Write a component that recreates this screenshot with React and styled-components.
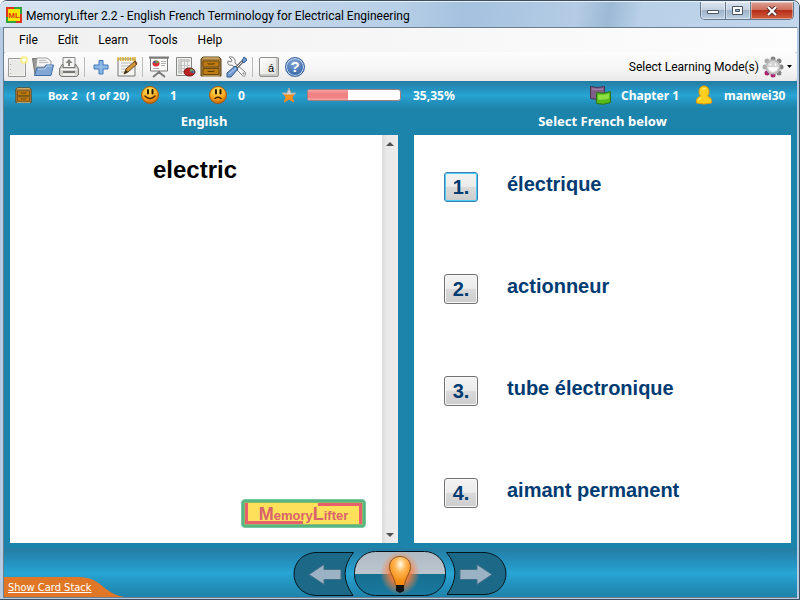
import React from "react";
import styled, { createGlobalStyle } from "styled-components";

const ui = `"Noto Sans", "Open Sans", sans-serif`;
const chrome = `Roboto, "Open Sans", sans-serif`;
const arial = `"Liberation Sans", Arial, sans-serif`;

const GlobalStyle = createGlobalStyle`
  * { box-sizing: border-box; }
  body { margin: 0; background: #fff; }
  button { font: inherit; color: inherit; padding: 0; border: 0; background: none; cursor: pointer; }
  svg { display: block; flex: none; }
`;

const Window = styled.div`
  min-height: 100vh;
  display: flex;
  flex-direction: column;
  padding: 2px 2px 1px 3px;
  border: 1px solid #3d4f60;
  border-width: 1px 1px 1px 0;
  border-radius: 7px 7px 0 0;
  background: #b4cbe2;
  font-family: ${ui};
  font-size: 12px;
  color: #000;
`;

const TitleBar = styled.header`
  display: flex;
  align-items: center;
  height: 26px;
  margin: -2px -2px 0 -3px;
  padding-left: 6px;
  border-radius: 6px 6px 0 0;
  border-top: 1px solid #e8f1fa;
  background: linear-gradient(100deg, #d5e2f0 0%, #cbdcee 25%, #b7cfe7 50%, #a5c1df 58%, #b4cce5 72%, #9db9d5 76%, #b8d0e8 80%, #c2d7ec 100%);
`;

const Title = styled.h1`
  flex: 1;
  margin: 2px 0 0 4px;
  font-family: ${chrome};
  font-size: 12px;
  line-height: 16px;
  font-weight: 400;
  white-space: nowrap;
`;

const Controls = styled.div`
  display: flex;
  align-self: flex-start;
  margin-right: 5px;
  height: 18px;
  border: 1px solid #64788e;
  border-top: 0;
  border-radius: 0 0 5px 5px;
  overflow: hidden;
`;

const ControlButton = styled.button`
  width: ${(p) => (p.$close ? 42 : 25)}px;
  display: grid;
  place-items: center;
  border-right: ${(p) => (p.$close ? 0 : 1)}px solid #64788e;
  background: ${(p) =>
    p.$close
      ? "linear-gradient(#dda093 0, #cf6f5c 45%, #b52c18 50%, #d0603f 100%)"
      : "linear-gradient(#dbe5f0 0, #c3d1e0 45%, #9fb3c9 50%, #bccfe3 100%)"};
  box-shadow: inset 0 0 0 1px #ffffff66;
`;

const Client = styled.div`
  flex: 1;
  display: flex;
  flex-direction: column;
  border: 1px solid #6b7f90;
  border-width: 1px 0 1px 1px;
`;

const MenuBar = styled.nav`
  display: flex;
  height: 24px;
  padding-left: 5px;
  background: linear-gradient(90deg, #f0f0f0, #f6f6f6 45%, #fdfdfd);
`;

const MenuItem = styled.button`
  height: 24px;
  padding: 0 10px;
  font-family: ${chrome};
  line-height: 24px;
`;

const Toolbar = styled.div`
  display: flex;
  align-items: center;
  gap: 4px;
  height: 29px;
  padding: 0 5px 0 2px;
  background: linear-gradient(#fdfdfd, #f5f5f5 60%, #e9e9e9);
  border-radius: 3px;
`;

const ToolButton = styled.button`
  width: 22px;
  height: 22px;
`;

const Divider = styled.span`
  width: 2px;
  height: 20px;
  border-left: 1px solid #bcbcbc;
`;

const ModeButton = styled.button`
  display: flex;
  align-items: center;
  gap: 3px;
  margin-left: auto;
  font-family: ${chrome};
  line-height: 22px;
`;

const band = "linear-gradient(#257ca3 0%, #2496c4 35%, #28a5d4 52%, #2391be 75%, #1e83aa 100%)";

const StatusBar = styled.section`
  display: flex;
  align-items: center;
  height: 28px;
  padding: 0 8px 0 10px;
  background: ${band};
  color: #fff;
  font-weight: 700;
  white-space: nowrap;
`;

const StatusIcon = styled.span`
  width: ${(p) => p.$width || 24}px;
  margin-right: ${(p) => p.$after || 8}px;
  display: flex;
  justify-content: center;
`;

const StatusText = styled.span`
  width: ${(p) => (p.$width ? `${p.$width}px` : "auto")};
  font-size: ${(p) => (p.$small ? 11 : 12)}px;
`;

const Spacer = styled.span`
  flex: 1;
`;

const Track = styled.div`
  width: 94px;
  height: 12px;
  margin-right: 12px;
  border: 1px solid #a67b7f;
  border-radius: 3px;
  background: #fff;
  overflow: hidden;
`;

const Fill = styled.div`
  height: 100%;
  background: linear-gradient(#f5a1a1, #f08080 40%, #f08484 75%, #f6a5a5);
`;

const Main = styled.main`
  flex: 1;
  display: grid;
  grid-template-columns: 388fr 377fr;
  grid-template-rows: 26px 1fr;
  column-gap: 16px;
  padding: 0 6px 5px;
  background: #1c84aa;
`;

const PaneTitle = styled.h2`
  margin: 0;
  color: #fff;
  font-size: 13px;
  line-height: 24px;
  font-weight: 700;
  text-align: center;
`;

const Question = styled.section`
  display: grid;
  grid-template-columns: 1fr 16px;
  background: #fff;
`;

const QuestionBody = styled.div`
  display: flex;
  flex-direction: column;
  justify-content: space-between;
  padding: 20px 16px 15px 0;
`;

const Word = styled.p`
  margin: 0;
  padding-left: 14px;
  font: 700 24px/30px ${arial};
  text-align: center;
`;

const Logo = styled.div`
  align-self: flex-end;
  width: 125px;
  height: 29px;
  padding: 2px;
  border: 1px solid #79c79a;
  border-radius: 4px;
  background: #55b584;
`;

const LogoFace = styled.div`
  height: 100%;
  border: 1px solid #8cbb68;
  background:
    linear-gradient(#e8606c, #e8606c) left / 3px 100% no-repeat,
    linear-gradient(#e8606c, #e8606c) left bottom / 58px 3px no-repeat,
    linear-gradient(#e8606c, #e8606c) right / 3px 100% no-repeat,
    linear-gradient(#e8606c, #e8606c) right top / 44px 3px no-repeat,
    #ffe05a;
  color: #d9636c;
  font: 700 13px/23px ${arial};
  text-align: center;
`;

const Capital = styled.span`
  font-size: 18px;
`;

const Scrollbar = styled.div`
  display: flex;
  flex-direction: column;
  justify-content: space-between;
  background: linear-gradient(90deg, #dcdcdc, #e9e9e9 30%, #ececec);
`;

const ScrollButton = styled.button`
  height: 17px;
  display: grid;
  place-items: center;
`;

const Answers = styled.section`
  display: grid;
  grid-template-rows: repeat(4, 1fr);
  padding: 0 30px;
  background: #fff;
  color: #003b72;
  font: 700 20px/24px ${arial};
`;

const Answer = styled.div`
  display: flex;
  align-items: center;
  gap: 29px;
`;

const AnswerButton = styled.button`
  width: 34px;
  height: 30px;
  margin-top: 2px;
  border: 1px solid ${(p) => (p.$active ? "#3c7fb1" : "#707070")};
  border-radius: 3px;
  background: linear-gradient(#f3f3f3 0, #ebebeb 48%, #dadada 50%, #cdcdcd 100%);
  box-shadow: inset 0 0 0 ${(p) => (p.$active ? "1px #45cff8" : "1px #f8f8f8")};
  line-height: 28px;
`;

const AnswerLabel = styled.label`
  margin-bottom: 4px;
`;

const Footer = styled.footer`
  display: grid;
  grid-template-columns: 1fr 214px 1fr;
  height: 49px;
  padding-right: 2px;
  background: ${band};
`;

const Tab = styled.div`
  display: grid;
  align-self: end;
  justify-self: start;
  width: 120px;
  height: 20px;
  > * { grid-area: 1 / 1; }
`;

const TabLink = styled.a`
  z-index: 1;
  padding-left: 4px;
  color: #fff;
  font: 11px/22px "DejaVu Sans Condensed", "DejaVu Sans", sans-serif;
`;

const Nav = styled.nav`
  display: flex;
  justify-content: space-between;
  padding-top: 2px;
`;

const NavButton = styled.button`
  height: 47px;
`;

const Cabinet = ({ size = 22 }) => (
  <svg width={size} height={size} viewBox="0 0 22 22">
    <path d="M3 1h16l2 2v17H1V3z" fill="#ad8043" stroke="#594015" />
    <path d="M3 2h16" stroke="#e0bd7d" />
    <path d="M3 5h16v6H3zM3 12.500h16v6H3z" fill="#c07a12" stroke="#6a4b10" />
    <path d="M8 7v1h6V7M8 14.500v1h6v-1" fill="none" stroke="#573c0b" />
    <path d="M2.500 20h17" stroke="#e0bf80" />
  </svg>
);

const PageIcon = () => (
  <svg width="22" height="22" viewBox="0 0 22 22">
    <path d="M2.500 2.500h17v18h-17z" fill="#f2f2f1" stroke="#9a9a98" />
    <path d="M4 4h14v15H4z" fill="#e9e9e8" />
    <path d="M4.500 8v1M4.500 13v1M4.500 17v1" stroke="#aaa" />
    <circle cx="18" cy="4" r="4" fill="#f8ed80" opacity=".8" />
    <circle cx="18" cy="4" r="2" fill="#fffef0" />
  </svg>
);

const FolderIcon = () => (
  <svg width="22" height="22" viewBox="0 0 22 22">
    <path d="M.5 2.500h7l1 2h9v14H3z" fill="#9a9a98" stroke="#757674" />
    <path d="M4 10l1-8h10l4 3v6H4z" fill="#f3f3f3" stroke="#9e9f9d" />
    <path d="M7 4.500h7M7 6.500h9" stroke="#bbb" />
    <path d="M2.500 19.500L5 12h7l2-3h7.500l-2.500 10.500z" fill="#81a7d5" stroke="#426fa9" />
    <path d="M6 13h7l2-3h5" fill="none" stroke="#c0d5ee" />
  </svg>
);

const PrinterIcon = () => (
  <svg width="22" height="22" viewBox="0 0 22 22">
    <path d="M5 11V1.500h12V11" fill="#f5f5f4" stroke="#888" />
    <path d="M4 8.500L1.500 13v6l2 1.500h15l2-1.500v-6L18 8.500h-1v3H5v-3z" fill="#d2d2cf" stroke="#777974" />
    <path d="M11 3l3.500 4H12v3h-2V7H7.500z" fill="#858582" />
    <path d="M3 13.500h16" stroke="#fff" />
    <path d="M5 15h12v2H5z" fill="#777975" />
    <path d="M5 18.500h12" stroke="#f7f7f7" strokeWidth="2" />
  </svg>
);

const PlusIcon = () => (
  <svg width="22" height="22" viewBox="0 0 22 22">
    <path d="M9 4.500h4V9h5v4h-5v5H9v-5H4V9h5z" fill="#8db9e9" stroke="#3d76b9" />
  </svg>
);

const NotepadIcon = () => (
  <svg width="22" height="22" viewBox="0 0 22 22">
    <path d="M2 3h17v17H2z" fill="#f4f4f2" stroke="#777" />
    <path d="M5 7h11M5 10h9M5 13h6M5 16h4" stroke="#bbb" />
    <path d="M2 1v4M4.500 1v4M7 1v4M9.500 1v4M12 1v4M14.500 1v4M17 1v4M19 1v4" stroke="#ddb63d" strokeWidth="1.500" />
    <path d="M8 18l2-5 9-8 2 3-9 8z" fill="#d5973a" stroke="#68451a" />
    <path d="M8 18l2-4 2 2z" fill="#352c20" />
    <path d="M18.500 5l2 2.500" stroke="#774d25" strokeWidth="2" />
  </svg>
);

const BoardIcon = () => (
  <svg width="22" height="22" viewBox="0 0 22 22">
    <path d="M11 15v3M5 21l5-4h2l5 4" fill="none" stroke="#797a77" strokeWidth="2" />
    <path d="M2.500 2h17v13h-17z" fill="#fafaf9" stroke="#777" />
    <path d="M1 1.500h20" stroke="#797b78" strokeWidth="2" />
    <path d="M13 5.500h5M13 7.500h5M13 9.500h4M5 12.500h6" stroke="#b0b1af" />
    <ellipse cx="8" cy="7.500" rx="3.500" ry="3" fill="#de3034" />
    <path d="M8 7.500L11.500 6.500a4 3 0 0 0-4.500-2z" fill="#719b4f" />
    <path d="M8 7.500l-3.500-1 2.500-2z" fill="#3d68a3" />
  </svg>
);

const ReportIcon = () => (
  <svg width="22" height="22" viewBox="0 0 22 22">
    <path d="M2.500 1.500h15v18h-15z" fill="#f1f1ef" stroke="#888" />
    <path d="M4 3h12v3H4zM4 3h3v15H4z" fill="#cfd0cd" />
    <path d="M4 9.500h12M4 12.500h12M4 15.500h8M7.500 3v15M10.500 3v14M13.500 3v12" stroke="#c4c5c2" />
    <ellipse cx="15.500" cy="16" rx="5.500" ry="4" fill="#be2020" stroke="#701111" />
    <path d="M15.500 16l5-1.500a6 4.500 0 0 0-4-2z" fill="#6ea061" />
    <path d="M15.500 16l5-1.500v3z" fill="#41729e" />
  </svg>
);

const ToolsIcon = () => (
  <svg width="22" height="22" viewBox="0 0 22 22">
    <path d="M3 1l3 3-1 2-3-1c-1 3 1 5 4 4l10 10c2 3 5 0 3-3L9 7c1-4-2-7-6-6z" fill="#f5f5f4" stroke="#80817f" />
    <circle cx="17.500" cy="17.500" r="1" fill="#888" />
    <path d="M20 2L10 12" stroke="#666" strokeWidth="3" />
    <path d="M20 2L10 12" stroke="#eee" />
    <path d="M18 1l3 3-3 3-2-2z" fill="#6b9cd4" stroke="#365f93" />
    <path d="M9 10l3 3-7 8H1v-4z" fill="#6e9bd1" stroke="#345c93" />
    <path d="M3 18l7-6" stroke="#bad0ed" />
  </svg>
);

const KeyFace = styled.span`
  display: block;
  width: 20px;
  height: 20px;
  margin: auto;
  border: 1px solid #8e8f8c;
  border-radius: 2px;
  background: linear-gradient(135deg, #fff, #dedfdb);
  box-shadow: inset -2px -2px #c9cac6;
  padding-left: 4px;
  font: 11px/20px ${arial};
  text-align: center;
`;

const HelpFace = styled.span`
  display: block;
  width: 20px;
  height: 20px;
  margin: auto;
  border: 1px solid #345f9f;
  border-radius: 50%;
  background: radial-gradient(circle at 45% 25%, #86a9d6, #3969aa 75%);
  box-shadow: inset 0 0 0 1px #d7e4f4;
  color: #fff;
  font: 700 15px/18px ${arial};
  text-align: center;
`;

const ModeIcon = () => (
  <svg width="22" height="22" viewBox="0 0 22 22">
    <g fill="#858585">
      <circle cx="11" cy="3" r="2.500" /><circle cx="17" cy="5" r="2.500" /><circle cx="19" cy="11" r="2.500" />
      <circle cx="17" cy="17" r="2.500" />
    </g>
    <g fill="#aaa"><circle cx="5" cy="5" r="2.500" /><circle cx="3" cy="11" r="2.500" /></g>
    <g fill="#a7266b"><circle cx="5" cy="17" r="2.500" /><circle cx="11" cy="19" r="2.500" /></g>
    <circle cx="11" cy="11" r="7.500" fill="#b9b9b9" />
    <circle cx="11" cy="11" r="6" fill="#d4d4d4" />
    <path d="M8.500 7.500v2M13.500 7.500v2M7 12c1.500 4 6.500 4 8 0z" fill="#fff" stroke="#fff" strokeWidth="1.500" />
  </svg>
);

const Face = ({ sad }) => (
  <svg width="20" height="20" viewBox="0 0 20 20">
    <defs>
      <radialGradient id={sad ? "sadFace" : "happyFace"} cx=".45" cy=".25" r=".8">
        <stop offset="0" stopColor="#ffe95a" />
        <stop offset=".6" stopColor="#f9a51c" />
        <stop offset="1" stopColor="#bb5304" />
      </radialGradient>
    </defs>
    <circle cx="10" cy="10" r="8.500" fill={`url(#${sad ? "sadFace" : "happyFace"})`} stroke="#a35a10" />
    <path d="M8 5v3.500M12.500 5v3.500" stroke="#2b1500" strokeWidth="2" strokeLinecap="round" />
    <path d={sad ? "M7 13.500q3-2.500 6 0" : "M5 11q5 5 10 0"} fill="none" stroke="#4b2400" strokeWidth="1.500" strokeLinecap="round" />
  </svg>
);

const StarIcon = () => (
  <svg width="16" height="16" viewBox="0 0 16 16">
    <path d="M8 1l2 5h5l-4 4 1.500 5L8 12l-4.500 3L5 10 1 6h5z" fill="#d4d4d2" stroke="#a3a5a3" />
    <path d="M3 8h10l-2 2 1.500 5L8 12l-4.500 3L5 10z" fill="#f9951c" stroke="#e78522" />
  </svg>
);

const ChapterIcon = () => (
  <svg width="24" height="20" viewBox="0 0 24 20">
    <path d="M1.500 1.500q7 2 14 0v12q-7 2-14 0z" fill="#80608a" stroke="#49334f" />
    <path d="M3 4q5 1 11 0" fill="none" stroke="#a98bb1" />
    <path d="M7.500 7.500q7 2 14-1v11q-7 3-14 1z" fill="#58b81c" stroke="#2c7215" />
    <path d="M9 9.500q5 1 11-1v5q-6 2-11 1z" fill="#8bdf42" />
  </svg>
);

const UserIcon = () => (
  <svg width="18" height="20" viewBox="0 0 18 20">
    <path d="M1.500 18q-1-5 4-7Q3.500 9 4 5.500 5 1 9 1t5 4.500Q14.500 9 12.500 11q5 2 4 7-8 2-15 0z" fill="#ffce1f" stroke="#e39806" />
    <path d="M6 6q1-3 3-3 2 0 2 1-4 0-5 2zM3 16q0-3 4-4" fill="#fff18a" />
  </svg>
);

const BackIcon = () => (
  <svg width="61" height="47" viewBox="0 0 61 47">
    <path d="M22 2.500h38.500Q44 23 60 45.500H22C-6 43-6 5 22 2.500z" fill="#1b6887" stroke="#06151c" />
    <path d="M16 24.500l15-10v5h17v10H31v5z" fill="#9bb2c4" stroke="#427089" />
  </svg>
);

const ForwardIcon = () => (
  <svg width="61" height="47" viewBox="0 0 61 47">
    <path d="M39 2.500H.5Q17 22 1 44.500h38C67 43 67 5 39 2.500z" fill="#1b6887" stroke="#06151c" />
    <path d="M46 24.500l-15-10v5H14v10h17v5z" fill="#9bb2c4" stroke="#427089" />
  </svg>
);

const BulbIcon = () => (
  <svg width="92" height="47" viewBox="0 0 92 47">
    <defs>
      <linearGradient id="pill" x1="0" y1="0" x2="0" y2="1">
        <stop offset="0" stopColor="#aebac4" />
        <stop offset=".52" stopColor="#bdc6cf" />
        <stop offset=".52" stopColor="#176f92" />
        <stop offset="1" stopColor="#19799e" />
      </linearGradient>
      <radialGradient id="glow">
        <stop offset=".4" stopColor="#ff7a31" />
        <stop offset="1" stopColor="#ff8a4a" stopOpacity="0" />
      </radialGradient>
      <radialGradient id="bulb" cx=".52" cy=".27" r=".6">
        <stop offset="0" stopColor="#fffbe8" />
        <stop offset=".45" stopColor="#ffb554" />
        <stop offset="1" stopColor="#f58c12" />
      </radialGradient>
    </defs>
    <rect x=".5" y="1.500" width="91" height="44" rx="21" fill="url(#pill)" stroke="#071319" />
    <ellipse cx="46" cy="23" rx="20" ry="22" fill="url(#glow)" />
    <path d="M46 6.500c-7 0-10.500 5-10.500 10 0 7 5 10 6 19h9c1-9 6-12 6-19 0-5-3.500-10-10.500-10z" fill="url(#bulb)" stroke="#85552a" />
    <path d="M42 35h8v6l-4 2-4-2z" fill="#111" />
  </svg>
);

const answers = ["électrique", "actionneur", "tube électronique", "aimant permanent"];

export default function App() {
  return (
    <>
      <GlobalStyle />
      <Window>
        <TitleBar>
          <svg width="16" height="16" viewBox="0 0 16 16">
            <path d="M1 1h14v14H1z" fill="#fce500" stroke="#df3320" strokeWidth="2" />
            <path d="M1 10v5h9M8 1h7v6" fill="none" stroke="#32a13b" strokeWidth="2" />
            <text x="8" y="11" textAnchor="middle" fontFamily="Liberation Sans" fontSize="8" fontWeight="700" fill="#e23b14">ML</text>
          </svg>
          <Title>MemoryLifter 2.2 - English French Terminology for Electrical Engineering</Title>
          <Controls>
            <ControlButton aria-label="Minimize">
              <svg width="14" height="8" viewBox="0 0 14 8"><path d="M1.500 3.500h11v3h-11z" fill="#fff" stroke="#4b5664" /></svg>
            </ControlButton>
            <ControlButton aria-label="Maximize">
              <svg width="12" height="10" viewBox="0 0 12 10"><path d="M.5.500h10v8H.5zM3.500 3.500h4v2h-4z" fill="#fff" fillRule="evenodd" stroke="#4b5664" /></svg>
            </ControlButton>
            <ControlButton $close aria-label="Close">
              <svg width="12" height="10" viewBox="0 0 12 10">
                <path d="M2 1l8 8M10 1L2 9" stroke="#593030" strokeWidth="4" />
                <path d="M2 1l8 8M10 1L2 9" stroke="#fff" strokeWidth="2" />
              </svg>
            </ControlButton>
          </Controls>
        </TitleBar>
        <Client>
          <MenuBar>
            {["File", "Edit", "Learn", "Tools", "Help"].map((m) => <MenuItem key={m}>{m}</MenuItem>)}
          </MenuBar>
          <Toolbar>
            <ToolButton aria-label="New"><PageIcon /></ToolButton>
            <ToolButton aria-label="Open"><FolderIcon /></ToolButton>
            <ToolButton aria-label="Print"><PrinterIcon /></ToolButton>
            <Divider />
            <ToolButton aria-label="Add card"><PlusIcon /></ToolButton>
            <ToolButton aria-label="Edit card"><NotepadIcon /></ToolButton>
            <Divider />
            <ToolButton aria-label="Slide show"><BoardIcon /></ToolButton>
            <ToolButton aria-label="Statistics"><ReportIcon /></ToolButton>
            <ToolButton aria-label="Boxes"><Cabinet /></ToolButton>
            <ToolButton aria-label="Settings"><ToolsIcon /></ToolButton>
            <Divider />
            <ToolButton aria-label="Character map"><KeyFace>á</KeyFace></ToolButton>
            <ToolButton aria-label="Help"><HelpFace>?</HelpFace></ToolButton>
            <ModeButton>
              Select Learning Mode(s)
              <ModeIcon />
              <svg width="5" height="3" viewBox="0 0 5 3"><path d="M0 0h5L2.500 3z" /></svg>
            </ModeButton>
          </Toolbar>
          <StatusBar>
            <StatusIcon $width={18} $after={16}><Cabinet size={17} /></StatusIcon>
            <StatusText $small $width={38}>Box 2</StatusText>
            <StatusText $small $width={52}>(1 of 20)</StatusText>
            <StatusIcon><Face /></StatusIcon>
            <StatusText $width={36}>1</StatusText>
            <StatusIcon><Face sad /></StatusIcon>
            <StatusText $width={39}>0</StatusText>
            <StatusIcon $after={6}><StarIcon /></StatusIcon>
            <Track role="progressbar" aria-label="Score" aria-valuenow={35.35} aria-valuemin={0} aria-valuemax={100}>
              <Fill style={{ width: "44%" }} />
            </Track>
            <StatusText>35,35%</StatusText>
            <Spacer />
            <StatusIcon><ChapterIcon /></StatusIcon>
            <StatusText $width={71}>Chapter 1</StatusText>
            <StatusIcon><UserIcon /></StatusIcon>
            <StatusText $width={65}>manwei30</StatusText>
          </StatusBar>
          <Main>
            <PaneTitle>English</PaneTitle>
            <PaneTitle>Select French below</PaneTitle>
            <Question>
              <QuestionBody>
                <Word>electric</Word>
                <Logo><LogoFace><Capital>M</Capital>emory<Capital>L</Capital>ifter</LogoFace></Logo>
              </QuestionBody>
              <Scrollbar>
                <ScrollButton aria-label="Scroll up">
                  <svg width="8" height="4" viewBox="0 0 8 4"><path d="M0 4l4-4 4 4z" fill="#505050" /></svg>
                </ScrollButton>
                <ScrollButton aria-label="Scroll down">
                  <svg width="8" height="4" viewBox="0 0 8 4"><path d="M0 0l4 4 4-4z" fill="#505050" /></svg>
                </ScrollButton>
              </Scrollbar>
            </Question>
            <Answers>
              {answers.map((a, i) => (
                <Answer key={a}>
                  <AnswerButton id={`answer-${i}`} $active={i === 0}>{i + 1}.</AnswerButton>
                  <AnswerLabel htmlFor={`answer-${i}`}>{a}</AnswerLabel>
                </Answer>
              ))}
            </Answers>
          </Main>
          <Footer>
            <Tab>
              <TabLink href="#stack">Show Card Stack</TabLink>
              <svg width="120" height="20" viewBox="0 0 120 20"><path d="M0 0h74c24 0 24 16 46 20H0z" fill="#e07726" /></svg>
            </Tab>
            <Nav>
              <NavButton aria-label="Previous"><BackIcon /></NavButton>
              <NavButton aria-label="Show answer"><BulbIcon /></NavButton>
              <NavButton aria-label="Next"><ForwardIcon /></NavButton>
            </Nav>
            <span />
          </Footer>
        </Client>
      </Window>
    </>
  );
}
